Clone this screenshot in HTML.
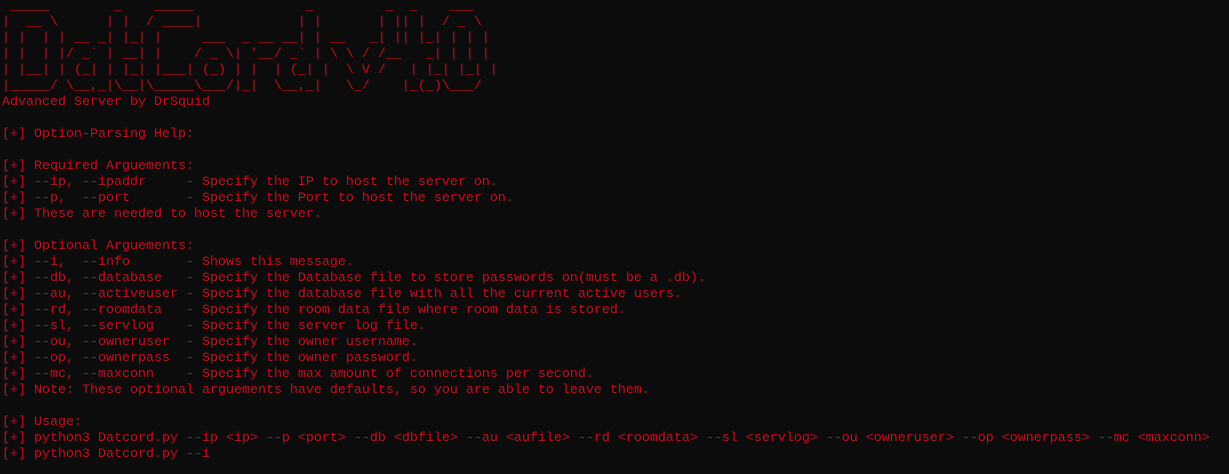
<!DOCTYPE html>
<html><head><meta charset="utf-8"><style>
html,body{margin:0;padding:0;background:#0c0c0c;width:1229px;height:474px;overflow:hidden}
pre{margin:0;position:absolute;left:2px;top:-1px;font-family:"Liberation Mono",monospace;font-size:13.33px;line-height:16px;color:#c50f1f;white-space:pre}
</style></head><body><pre> _____        _    _____              _         _  _    ___
|  __ \      | |  / ____|            | |       | || |  / _ \
| |  | | __ _| |_| |     ___  _ __ __| | __   _| || |_| | | |
| |  | |/ _` | __| |    / _ \| '__/ _` | \ \ / /__   _| | | |
| |__| | (_| | |_| |___| (_) | |  | (_| |  \ V /   | |_| |_| |
|_____/ \__,_|\__|\_____\___/|_|  \__,_|   \_/    |_(_)\___/
Advanced Server by DrSquid

[+] Option-Parsing Help:

[+] Required Arguements:
[+] --ip, --ipaddr     - Specify the IP to host the server on.
[+] --p,  --port       - Specify the Port to host the server on.
[+] These are needed to host the server.

[+] Optional Arguements:
[+] --i,  --info       - Shows this message.
[+] --db, --database   - Specify the Database file to store passwords on(must be a .db).
[+] --au, --activeuser - Specify the database file with all the current active users.
[+] --rd, --roomdata   - Specify the room data file where room data is stored.
[+] --sl, --servlog    - Specify the server log file.
[+] --ou, --owneruser  - Specify the owner username.
[+] --op, --ownerpass  - Specify the owner password.
[+] --mc, --maxconn    - Specify the max amount of connections per second.
[+] Note: These optional arguements have defaults, so you are able to leave them.

[+] Usage:
[+] python3 Datcord.py --ip &lt;ip&gt; --p &lt;port&gt; --db &lt;dbfile&gt; --au &lt;aufile&gt; --rd &lt;roomdata&gt; --sl &lt;servlog&gt; --ou &lt;owneruser&gt; --op &lt;ownerpass&gt; --mc &lt;maxconn&gt;
[+] python3 Datcord.py --i</pre></body></html>
